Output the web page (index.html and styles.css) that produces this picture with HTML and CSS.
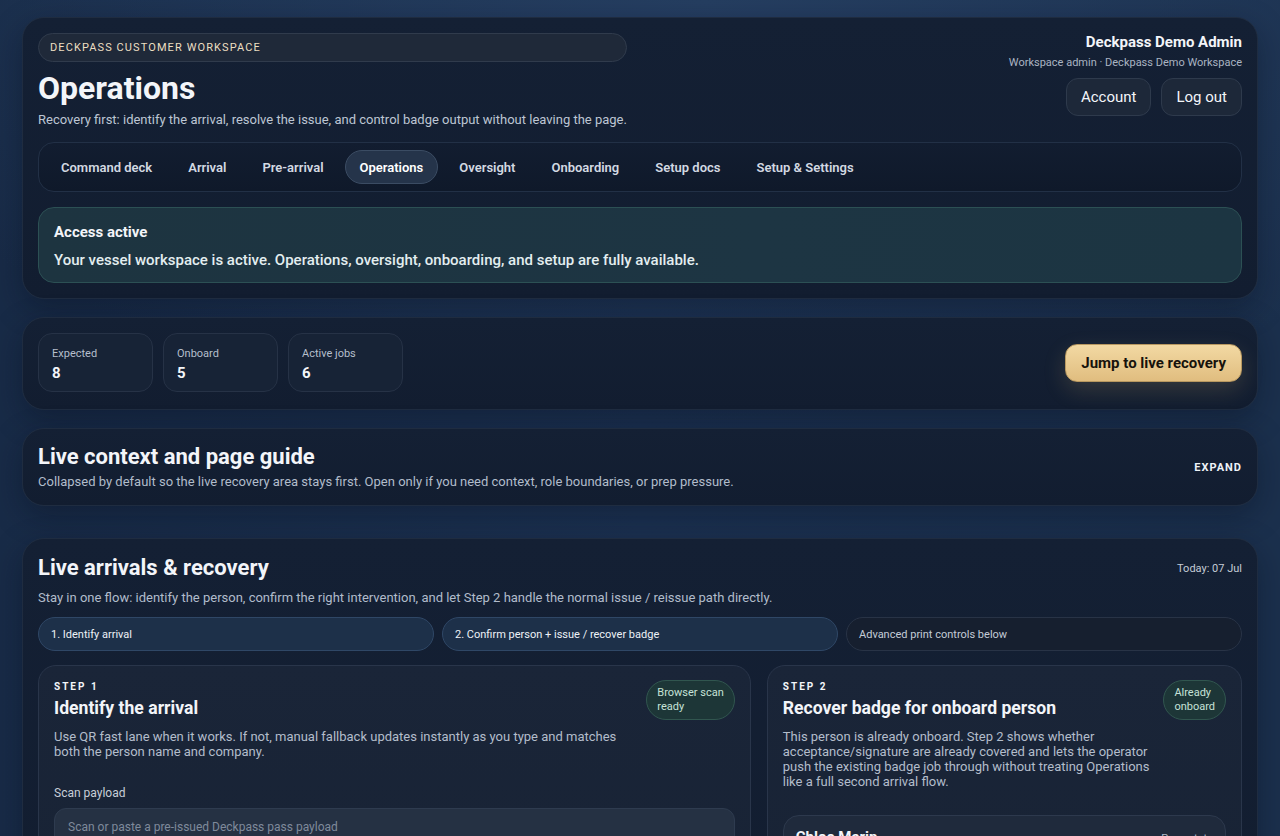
FILE: index.html
```html
<!DOCTYPE html>
<html lang="en">
<head>
<meta charset="utf-8">
<title>Operations · Deckpass</title>
<link rel="stylesheet" href="styles.css">
</head>
<body>
<main class="page">
  <section class="card hero">
    <div class="hero-top">
      <div class="hero-left">
        <div class="eyebrow">DECKPASS CUSTOMER WORKSPACE</div>
        <h1 class="page-title">Operations</h1>
        <p class="lead">Recovery first: identify the arrival, resolve the issue, and control badge output without leaving the page.</p>
      </div>
      <div class="hero-right">
        <div class="user-name">Deckpass Demo Admin</div>
        <div class="user-role">Workspace admin · Deckpass Demo Workspace</div>
        <div class="user-actions">
          <button class="ghost-btn">Account</button>
          <button class="ghost-btn">Log out</button>
        </div>
      </div>
    </div>
    <nav class="tabs">
      <a class="tab">Command deck</a>
      <a class="tab">Arrival</a>
      <a class="tab">Pre-arrival</a>
      <a class="tab active">Operations</a>
      <a class="tab">Oversight</a>
      <a class="tab">Onboarding</a>
      <a class="tab">Setup docs</a>
      <a class="tab">Setup &amp; Settings</a>
    </nav>
    <div class="notice">
      <div class="notice-title">Access active</div>
      <div class="notice-body">Your vessel workspace is active. Operations, oversight, onboarding, and setup are fully available.</div>
    </div>
  </section>

  <section class="card stats-card">
    <div class="stats">
      <div class="stat"><div class="stat-label">Expected</div><div class="stat-value">8</div></div>
      <div class="stat"><div class="stat-label">Onboard</div><div class="stat-value">5</div></div>
      <div class="stat"><div class="stat-label">Active jobs</div><div class="stat-value">6</div></div>
    </div>
    <button class="gold-btn">Jump to live recovery</button>
  </section>

  <section class="card guide">
    <div>
      <h2 class="section-title">Live context and page guide</h2>
      <p class="muted">Collapsed by default so the live recovery area stays first. Open only if you need context, role boundaries, or prep pressure.</p>
    </div>
    <span class="expand">EXPAND</span>
  </section>

  <section class="card live">
    <div class="live-head">
      <h2 class="section-title">Live arrivals &amp; recovery</h2>
      <span class="today">Today: 07 Jul</span>
    </div>
    <p class="muted live-sub">Stay in one flow: identify the person, confirm the right intervention, and let Step 2 handle the normal issue / reissue path directly.</p>
    <div class="flow">
      <div class="flow-step on">1. Identify arrival</div>
      <div class="flow-step on">2. Confirm person + issue / recover badge</div>
      <div class="flow-step">Advanced print controls below</div>
    </div>
    <div class="steps">
      <div class="step">
        <div class="step-head">
          <div>
            <div class="step-kicker">STEP 1</div>
            <h3 class="step-title">Identify the arrival</h3>
          </div>
          <span class="badge">Browser scan<br>ready</span>
        </div>
        <p class="step-desc wide">Use QR fast lane when it works. If not, manual fallback updates instantly as you type and matches both the person name and company.</p>
        <label class="field-label">Scan payload</label>
        <div class="input">Scan or paste a pre-issued Deckpass pass payload</div>
      </div>
      <div class="step">
        <div class="step-head">
          <div>
            <div class="step-kicker">STEP 2</div>
            <h3 class="step-title">Recover badge for onboard person</h3>
          </div>
          <span class="badge">Already<br>onboard</span>
        </div>
        <p class="step-desc">This person is already onboard. Step 2 shows whether acceptance/signature are already covered and lets the operator push the existing badge job through without treating Operations like a full second arrival flow.</p>
        <div class="person">
          <div class="person-name">Chloe Marin</div>
          <div class="person-meta">Pass state</div>
        </div>
      </div>
    </div>
  </section>
</main>
</body>
</html>
```

FILE: styles.css
```css
* { box-sizing: border-box; }
html, body { margin: 0; padding: 0; }
body {
  font-family: Roboto, "Liberation Sans", Arial, sans-serif;
  color: #f3f5f9;
  background:
    radial-gradient(ellipse 900px 420px at 55% 0%, #253e61 0%, rgba(37,62,97,0) 100%),
    linear-gradient(90deg, #182b47 0%, #1c3252 50%, #1b304d 100%);
  min-height: 836px;
  overflow: hidden;
}
.page {
  padding: 17px 22px;
  display: flex;
  flex-direction: column;
  gap: 18px;
}
.card {
  background: linear-gradient(180deg, #142034 0%, #121d30 100%);
  border: 1px solid #1f2c40;
  border-radius: 22px;
  padding: 15px;
  box-shadow: 0 10px 30px rgba(5, 12, 25, 0.35);
}
.hero-top {
  display: flex;
  justify-content: space-between;
  align-items: flex-start;
}
.hero-left { display: flex; flex-direction: column; }
.eyebrow {
  height: 29px;
  border-radius: 15px;
  background: #1f2939;
  border: 1px solid #303b4c;
  color: #ecdfc2;
  font-size: 11px;
  letter-spacing: 1.1px;
  padding: 0 11px;
  display: flex;
  align-items: center;
}
.page-title {
  margin: 7px 0 0;
  font-size: 32px;
  line-height: 38px;
  font-weight: 700;
  letter-spacing: 0;
}
.lead {
  margin: 5px 0 0;
  font-size: 13px;
  line-height: 16px;
  color: #bdc6d3;
}
.hero-right {
  display: flex;
  flex-direction: column;
  align-items: flex-end;
  padding-top: 0;
}
.user-name { font-size: 15px; font-weight: 700; line-height: 18px; }
.user-role { font-size: 11px; color: #aab4c2; margin-top: 5px; line-height: 13px; }
.user-actions { display: flex; gap: 10px; margin-top: 9px; }
.ghost-btn {
  font-family: inherit;
  font-size: 15px;
  color: #f3f5f9;
  background: #1d2839;
  border: 1px solid #2e3a4c;
  border-radius: 12px;
  height: 38px;
  padding: 0 14px;
}
.tabs {
  margin-top: 14px;
  height: 50px;
  border: 1px solid #223046;
  border-radius: 16px;
  background: linear-gradient(180deg, #121d30 0%, #0f192a 100%);
  display: flex;
  align-items: center;
  padding: 0 7px;
  gap: 6px;
}
.tab {
  font-size: 13px;
  font-weight: 600;
  color: #d3d9e2;
  padding: 0 14px;
  height: 34px;
  border-radius: 17px;
  display: flex;
  align-items: center;
  border: 1px solid transparent;
}
.tab.active {
  background: #25344a;
  border-color: #3b4c63;
  color: #ffffff;
}
.notice {
  margin-top: 15px;
  border-radius: 16px;
  background: linear-gradient(90deg, #1d3440 0%, #1d3543 60%, #1c3542 100%);
  border: 1px solid #2c5054;
  padding: 15px 15px 13px;
}
.notice-title { font-size: 15px; font-weight: 700; line-height: 18px; }
.notice-body { font-size: 15px; font-weight: 500; color: #e3eef0; margin-top: 10px; line-height: 18px; }
.stats-card {
  display: flex;
  justify-content: space-between;
  align-items: center;
  padding: 15px 15px 17px;
}
.stats { display: flex; gap: 10px; }
.stat {
  width: 115px;
  height: 59px;
  border-radius: 14px;
  background: #172336;
  border: 1px solid #263246;
  padding: 13px 13px 0;
}
.stat-label { font-size: 11px; color: #b5bfcc; line-height: 14px; }
.stat-value { font-size: 15px; font-weight: 700; margin-top: 3px; line-height: 18px; }
.gold-btn {
  font-family: inherit;
  font-size: 15px;
  font-weight: 700;
  color: #17130c;
  height: 38px;
  padding: 0 15px;
  border-radius: 12px;
  border: 1px solid #b89860;
  background: linear-gradient(180deg, #f2d9a3 0%, #e0bd7f 100%);
  box-shadow: 0 8px 22px rgba(214, 176, 110, 0.18);
}
.guide {
  display: flex;
  justify-content: space-between;
  align-items: center;
}
.section-title {
  margin: 0;
  font-size: 22px;
  line-height: 26px;
  font-weight: 700;
  letter-spacing: 0;
}
.muted {
  margin: 4px 0 0;
  font-size: 13px;
  line-height: 16px;
  color: #b1bccb;
}
.expand {
  font-size: 11px;
  font-weight: 700;
  letter-spacing: 1px;
  color: #eef2f7;
}
.live { margin-top: 14px; padding-top: 14px; }
.live-head {
  display: flex;
  justify-content: space-between;
  align-items: flex-start;
}
.live-head .section-title { line-height: 30px; }
.today { font-size: 11px; color: #c5ccd6; margin-top: 9px; }
.live-sub { margin-top: 7px; }
.flow {
  margin-top: 11px;
  display: grid;
  grid-template-columns: 1fr 1fr 1fr;
  gap: 8px;
}
.flow-step {
  height: 34px;
  border-radius: 17px;
  font-size: 11px;
  display: flex;
  align-items: center;
  padding: 0 12px;
  background: #161f2f;
  border: 1px solid #283346;
  color: #c4ccd7;
}
.flow-step.on {
  background: #1d3049;
  border-color: #2f4766;
  color: #eef2f7;
}
.steps {
  margin-top: 14px;
  display: grid;
  grid-template-columns: 3fr 2fr;
  gap: 16px;
}
.step {
  border-radius: 18px;
  background: linear-gradient(180deg, #1a2538 0%, #182335 100%);
  border: 1px solid #29354a;
  padding: 14px 15px 30px;
  min-height: 240px;
}
.step-head {
  display: flex;
  justify-content: space-between;
  align-items: flex-start;
}
.step-kicker {
  font-size: 10px;
  font-weight: 700;
  letter-spacing: 2px;
  line-height: 12px;
  margin-top: 1px;
}
.step-title {
  margin: 4px 0 0;
  font-size: 17.6px;
  font-weight: 700;
  line-height: 22px;
}
.badge {
  font-size: 11px;
  line-height: 14px;
  color: #c6e2d8;
  background: #1d3637;
  border: 1px solid #31564f;
  border-radius: 20px;
  padding: 5px 10px;
}
.step-desc {
  margin: 9px 0 0;
  font-size: 13px;
  line-height: 15px;
  color: #b3bdcb;
  max-width: 380px;
}
.step-desc.wide { max-width: 570px; }
.field-label {
  display: block;
  margin-top: 27px;
  font-size: 12px;
  color: #c8cfd9;
  line-height: 15px;
}
.input {
  margin-top: 7px;
  height: 42px;
  border-radius: 12px;
  background: #253143;
  border: 1px solid #2e3b4f;
  font-size: 12px;
  color: #7f8a9b;
  padding: 11px 13px;
}
.person {
  margin-top: 26px;
  border-radius: 16px;
  background: #1f2a3c;
  border: 1px solid #2d394d;
  padding: 12px 12px;
  display: flex;
  justify-content: space-between;
  align-items: flex-start;
}
.person-name { font-size: 15px; font-weight: 700; }
.person-meta { font-size: 11px; color: #b1bccb; margin-top: 4px; }
```
